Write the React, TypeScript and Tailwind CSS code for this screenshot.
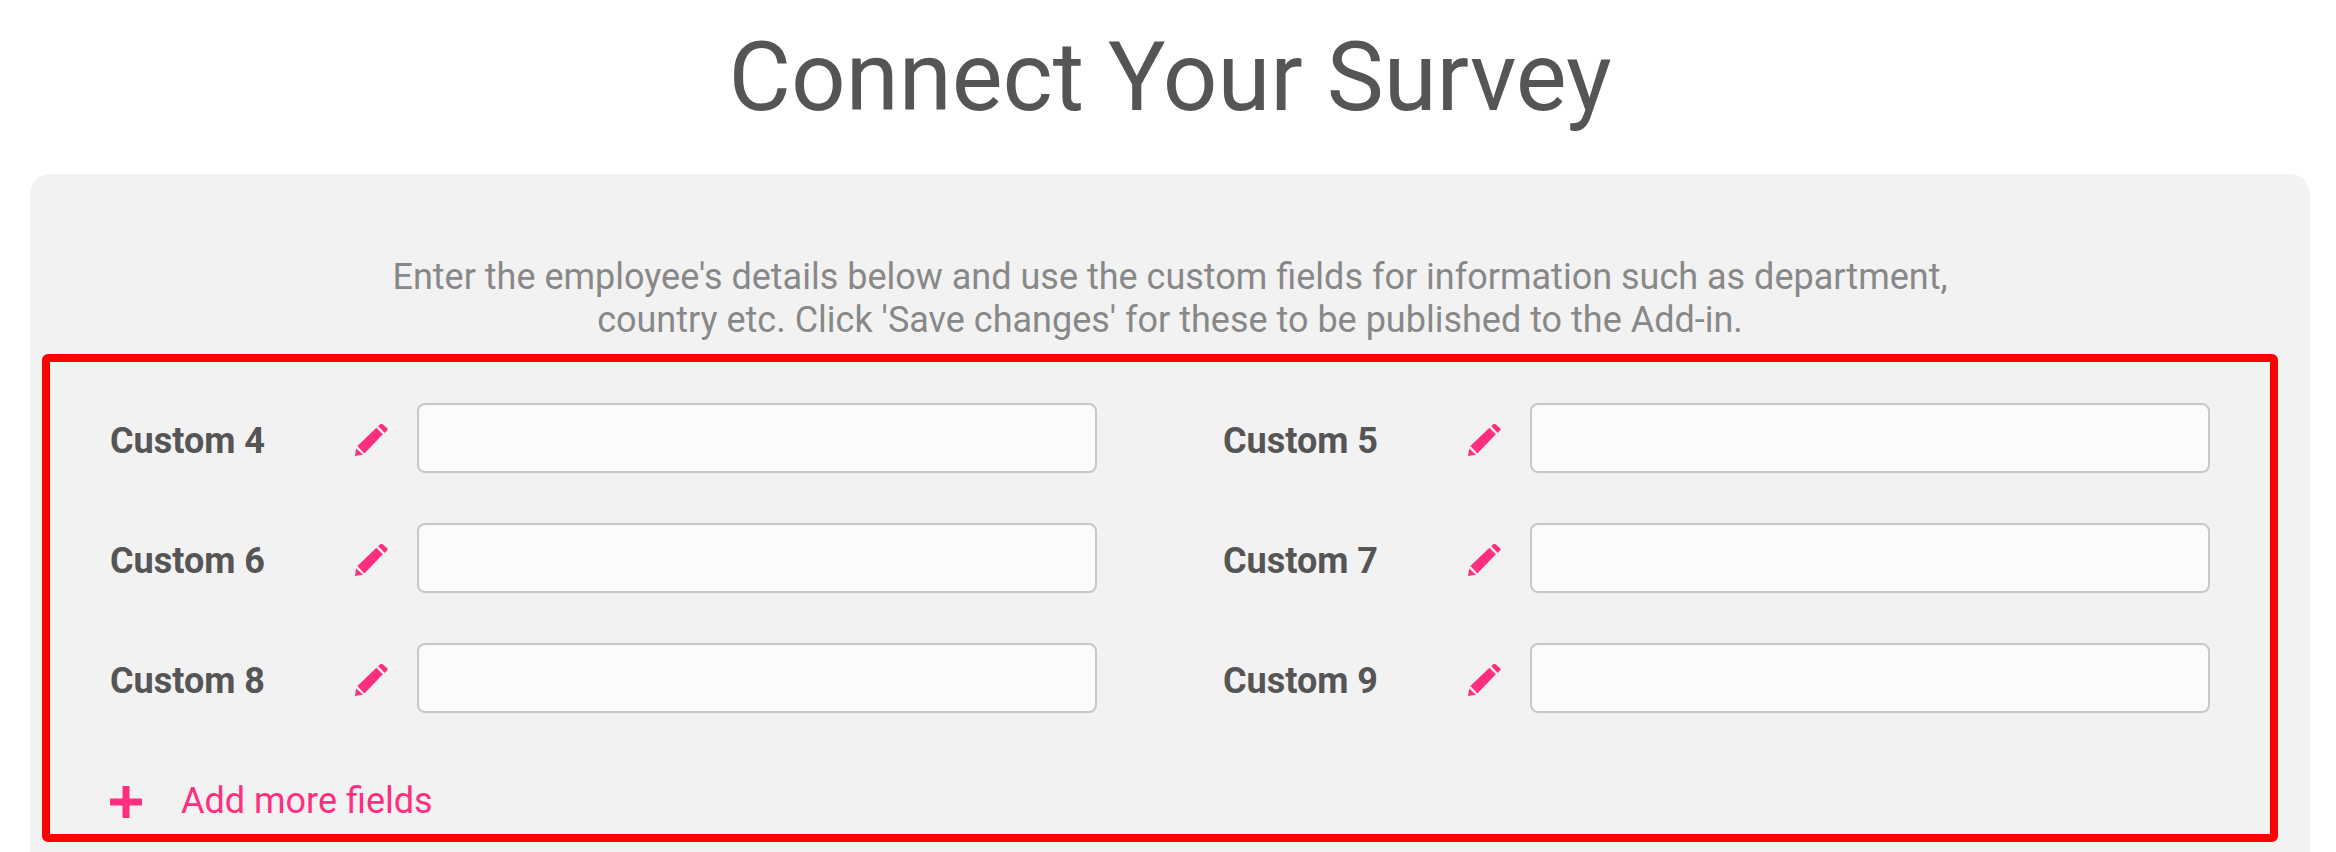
const fields = ["Custom 4", "Custom 5", "Custom 6", "Custom 7", "Custom 8", "Custom 9"];

function PencilIcon() {
	return (
		<svg viewBox="0 0 33 33" className="mt-[3px] -ml-[1px] mr-[1px] h-[33px] w-[33px] shrink-0" fill="#ff2e7e">
			<path d="M0 33 1.200 25.600 8 31.800Z" />
			<path d="M2.400 23 9.400 30.600 27.800 11.200 21.400 4.800Z" />
			<path d="M23.200 3.200 25 1.400C25.800.6 26.800.6 27.600 1.300L32 5C32.800 5.800 32.900 6.800 32.100 7.600L29.800 10Z" />
		</svg>
	);
}

function Field({ label }: { label: string }) {
	return (
		<div className="flex items-center">
			<label className="w-[246px] shrink-0 pt-[6px] text-[36px] leading-[43px] font-bold text-[#555]">{label}</label>
			<PencilIcon />
			<input type="text" className="ml-[28px] h-[70px] w-[680px] rounded-lg border-2 border-[#c8c8c8] bg-[#fbfbfb]" />
		</div>
	);
}

export default function App() {
	return (
		<div className="h-[852px] overflow-hidden bg-white pr-[26px] pl-[30px] font-['Roboto',sans-serif]">
			<h1 className="h-[174px] pt-[18px] text-center text-[96px] leading-[118px] font-normal text-[#555]">
				Connect Your Survey
			</h1>
			<div className="h-[678px] rounded-t-[20px] bg-[#f2f2f2] pt-[82px] pr-[32px] pl-3">
				<p className="h-[98px] pl-[20px] text-center text-[36px] leading-[43px] text-[#888]">
					Enter the employee's details below and use the custom fields for information such as department,
					<br />
					country etc. Click 'Save changes' for these to be published to the Add-in.
				</p>
				<div className="h-[488px] rounded-md border-8 border-[#ff0000] px-[60px] pt-[41px]">
					<div className="grid grid-cols-2 gap-x-[126px] gap-y-[50px]">
						{fields.map((f) => (
							<Field key={f} label={f} />
						))}
					</div>
					<div className="mt-[67px] flex items-center">
						<svg viewBox="0 0 32 32" className="mt-[1px] h-8 w-8 shrink-0" fill="#ff2e7e">
							<path d="M12.500 0h7v12.500h12.500v7H19.500V32h-7V19.500H0v-7h12.500z" />
						</svg>
						<span className="ml-[39px] text-[36px] leading-[43px] text-[#ff2e7e]">Add more fields</span>
					</div>
				</div>
			</div>
		</div>
	);
}
